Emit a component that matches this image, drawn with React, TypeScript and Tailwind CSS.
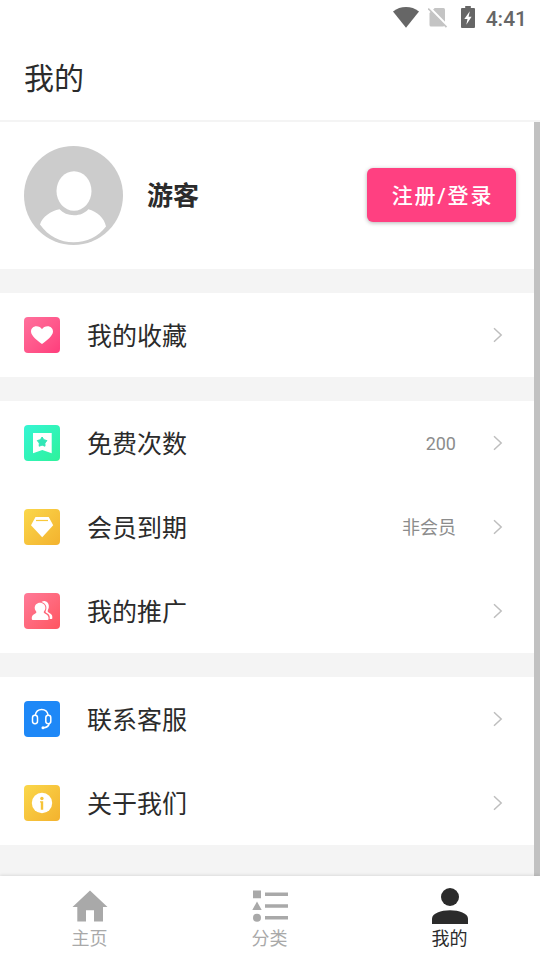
import type { ReactNode } from 'react';
import clsx from 'clsx';

interface RowProps {
  icon: ReactNode;
  tile: string;
  label: string;
  value?: string;
}

function StatusBar() {
  return (
    <div className="flex h-9 items-center justify-end pr-[13px] text-[#666]">
      <svg className="mr-[9px] mb-px h-[21px] w-[26px]" viewBox="0 0 26 21" fill="currentColor">
        <path d="M0 4.500C4 1.400 8.200 0 13 0s9 1.400 13 4.500L13 20.700z" />
      </svg>
      <svg className="mr-[13px] mb-px h-[21px] w-[20px]" viewBox="0 0 20 21">
        <path d="M6.700 1H15.500Q17 1 17 2.500V17.500Q17 19.500 15 19.500H3Q1.500 19.500 1.500 18V6z" fill="#c4c4c4" />
        <path d="M.8 .2 19.400 19.400" stroke="#fff" strokeWidth="3" />
        <path d="M.2 1.500 18.500 20.200" stroke="#c4c4c4" strokeWidth="1.700" />
      </svg>
      <svg className="mr-[10px] mb-[2px] h-[22px] w-[14px]" viewBox="0 0 14 22">
        <path d="M4.200 0h5.600v2H13q1 0 1 1v18q0 1-1 1H1q-1 0-1-1V3q0-1 1-1h3.200z" fill="#666" />
        <path d="M8.800 5.200 3.300 13h3.200L5.300 18.800 10.600 10.800H7.600z" fill="#fff" />
      </svg>
      <span className="pt-[2px] pl-px font-[Roboto] text-[21px] leading-none font-medium">4:41</span>
    </div>
  );
}

function Avatar() {
  return (
    <svg className="size-[99px] shrink-0" viewBox="0 0 99 99">
      <circle cx="49.500" cy="49.500" r="49.500" fill="#ccc" />
      <ellipse cx="50" cy="45" rx="17.500" ry="19.700" fill="#fff" />
      <path
        d="M35.500 63.300C39 67.200 44 69.300 50 69.300S61 67.200 64.300 63.300C73 65.800 80.500 72 82 80.500C74.500 90.500 62.500 96.300 49.500 96.300S24 90 16 78.500C18 71 27 65 35.500 63.300Z"
        fill="#fff"
      />
    </svg>
  );
}

function Row({ icon, tile, label, value }: RowProps) {
  return (
    <div className="flex h-[84px] items-center bg-white pr-[31px] pl-6">
      <div className={clsx('size-9 shrink-0 rounded-[4px]', tile)}>
        <svg className="size-9" viewBox="0 0 36 36" fill="#fff">
          {icon}
        </svg>
      </div>
      <span className="ml-[27px] flex-1 pt-1 text-[25px] leading-9">{label}</span>
      {value && <span className="mr-[37px] pt-[2px] text-[18px] leading-6 text-[#8c8c8c]">{value}</span>}
      <svg className="h-4 w-[10px]" viewBox="0 0 10 16" fill="none" stroke="#bebebe" strokeWidth="1.500">
        <path d="M1 1.200 8.200 8 1 14.800" />
      </svg>
    </div>
  );
}

const icons = {
  heart: (
    <path d="M18 27C13.500 23.500 7 19 7 14.500C7 11.300 9.500 9.200 12.300 9.200C14.800 9.200 17 10.400 18 12.200C19 10.400 21.200 9.200 23.700 9.200C26.500 9.200 29 11.300 29 14.500C29 19 22.500 23.500 18 27Z" />
  ),
  bookmark: (
    <>
      <path d="M9 8H27.700V28.300L18.300 25 9 28.300Z" />
      <path
        d="m18.100 12 1.700 2.700 3.100.9-2 2.500.1 3.100-2.900-1.100-2.900 1.100.1-3.100-2-2.500 3.100-.9z"
        fill="#31e6b6"
        stroke="#31e6b6"
        strokeLinejoin="round"
      />
    </>
  ),
  diamond: (
    <>
      <path d="M11.500 8H24.700L29.200 16.200 18.200 28.300 7 16.200Z" />
      <path d="M12 11.500H24" stroke="#f8c83a" strokeWidth="1.200" />
    </>
  ),
  people: (
    <>
      <path d="M17.500 9C18.600 8.200 20 7.900 21.300 8.200C24 8.700 25.200 11.400 24.800 14.300C24.600 16 23.500 17 23.700 18.500C24.200 20.300 28.200 20.200 28.300 23.700V25.300Q28.300 26 27.500 26H25.700V23.700C25.200 20 21.700 20.500 21.500 18.500C23.200 15.500 23 10.800 17.500 9Z" />
      <path d="M16 9.700C19.200 9.700 21.500 12 21.400 15C21.300 17.200 19.900 18 19.700 19.200C19.900 20.800 24.300 21 24.500 24.500V26Q24.500 27 23.500 27H8.800Q7.800 27 7.800 26V24.500C8 21 12.300 20.800 12.400 19.200C12.200 18 10.800 17.200 10.700 15C10.600 12 12.900 9.700 16 9.700Z" />
    </>
  ),
  headset: (
    <g fill="none" stroke="#fff" strokeWidth="1.500">
      <rect x="8.500" y="14.300" width="5" height="8.400" rx="2.400" />
      <rect x="21.800" y="14.300" width="5" height="8.400" rx="2.400" />
      <path d="M11.300 14.200C12 10.500 14.600 8.600 17.700 8.600S23.400 10.500 24.100 14.200M25.200 22.500C24.700 25.200 22.500 26.600 19.400 26.800" />
      <circle cx="19" cy="26.800" r=".8" fill="#fff" />
    </g>
  ),
  info: (
    <>
      <circle cx="18" cy="18" r="10.200" />
      <circle cx="17.900" cy="13.500" r="1.700" fill="#f6c338" />
      <path d="M16 16.300H19.200V24.700H16.800V17.500H16Z" fill="#f6c338" />
    </>
  ),
};

function NavItem({ label, active, children }: { label: string; active?: boolean; children: ReactNode }) {
  return (
    <div className={clsx('flex flex-1 flex-col items-center pt-3', active ? 'text-[#2b2b2b]' : 'text-[#a9a9a9]')}>
      <svg className="size-9" viewBox="0 0 36 36" fill="currentColor">
        {children}
      </svg>
      <span className="mt-[3px] pr-px text-[18px] leading-6">{label}</span>
    </div>
  );
}

export default function App() {
  return (
    <div className="flex h-[960px] w-[540px] flex-col overflow-hidden bg-white font-['Roboto','Noto_Sans_CJK_SC',sans-serif] text-[#2b2b2b]">
      <StatusBar />
      <header className="flex h-[86px] shrink-0 items-center border-b-2 border-[#f4f4f4] px-6 pt-px text-[30px]">我的</header>

      <div className="flex h-[754px] shrink-0">
        <main className="flex flex-1 flex-col gap-6 bg-[#f4f4f4]">
          <section className="flex h-[147px] items-center bg-white pr-[18px] pl-6">
            <Avatar />
            <span className="ml-6 flex-1 pt-[2px] text-[26px] font-bold">游客</span>
            <button className="mb-[2px] h-[54px] w-[149px] rounded-[6px] bg-[#ff4081] pt-[5px] pl-[2px] text-[21px] font-medium tracking-[1.900px] text-white shadow-[0_1px_4px_rgba(0,0,0,0.3)]">
              注册/登录
            </button>
          </section>
          <section>
            <Row icon={icons.heart} tile="bg-linear-to-br from-[#ff709c] to-[#ff3c7c]" label="我的收藏" />
          </section>
          <section>
            <Row icon={icons.bookmark} tile="bg-linear-to-br from-[#36f5d4] to-[#2ff29a]" label="免费次数" value="200" />
            <Row icon={icons.diamond} tile="bg-linear-to-br from-[#fad74a] to-[#f3b22e]" label="会员到期" value="非会员" />
            <Row icon={icons.people} tile="bg-linear-to-br from-[#ff7a98] to-[#ff5560]" label="我的推广" />
          </section>
          <section>
            <Row icon={icons.headset} tile="bg-[#1e88f7]" label="联系客服" />
            <Row icon={icons.info} tile="bg-linear-to-br from-[#fad74a] to-[#f3b22e]" label="关于我们" />
          </section>
        </main>
        <div className="w-[6px] bg-[#c1c1c1]" />
      </div>

      <nav className="relative flex h-[84px] shrink-0 bg-white shadow-[0_-1px_3px_rgba(0,0,0,0.1)]">
        <NavItem label="主页">
          <path d="M18 2.500 35.500 19H31V33.500H22V22.300H14V33.500H5.300V19H.5Z" />
        </NavItem>
        <NavItem label="分类">
          <path d="M1 2.500H9V10.300H1ZM5 13.500 9.700 22H.3ZM13 4.500H36V8H13ZM13 16.300H36V19.800H13ZM13 28H36V31.500H13Z" />
          <circle cx="5" cy="29.700" r="4" />
        </NavItem>
        <NavItem label="我的" active>
          <circle cx="18" cy="9" r="9" />
          <path d="M0 36V30.500C0 25.500 9 22.300 18 22.300S36 25.500 36 30.500V36Z" />
        </NavItem>
      </nav>
    </div>
  );
}
